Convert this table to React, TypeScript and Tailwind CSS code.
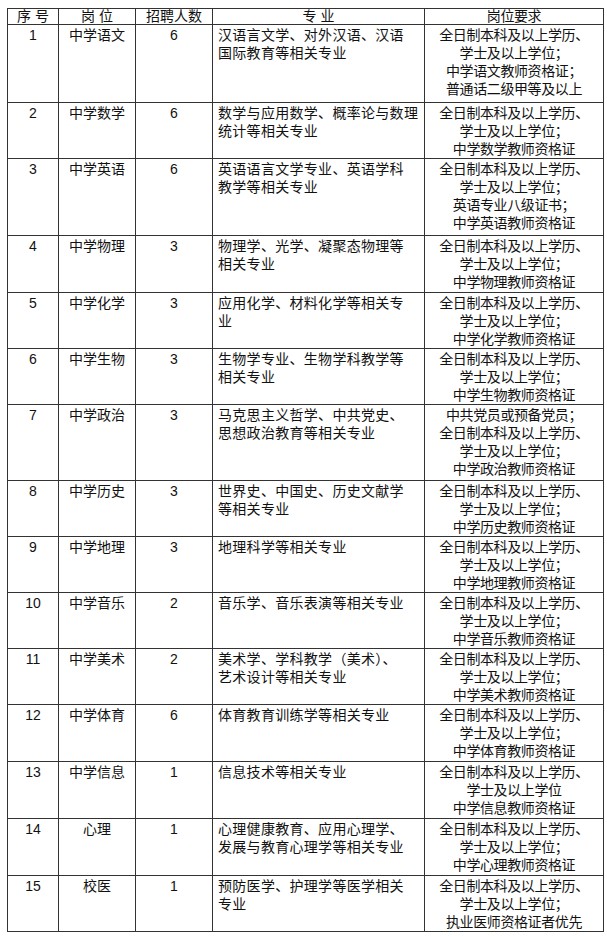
import React from "react";

type Row = {
  no: string;
  post: string;
  count: string;
  major: string[];
  req: string[];
  h: number;
};

const REQ = ["全日制本科及以上学历、", "学士及以上学位；"];

const ROWS: Row[] = [
  { no: "1", post: "中学语文", count: "6", major: ["汉语言文学、对外汉语、汉语", "国际教育等相关专业"], req: [...REQ, "中学语文教师资格证；", "普通话二级甲等及以上"], h: 78 },
  { no: "2", post: "中学数学", count: "6", major: ["数学与应用数学、概率论与数理", "统计等相关专业"], req: [...REQ, "中学数学教师资格证"], h: 54 },
  { no: "3", post: "中学英语", count: "6", major: ["英语语言文学专业、英语学科", "教学等相关专业"], req: [...REQ, "英语专业八级证书；", "中学英语教师资格证"], h: 77 },
  { no: "4", post: "中学物理", count: "3", major: ["物理学、光学、凝聚态物理等", "相关专业"], req: [...REQ, "中学物理教师资格证"], h: 57 },
  { no: "5", post: "中学化学", count: "3", major: ["应用化学、材料化学等相关专", "业"], req: [...REQ, "中学化学教师资格证"], h: 56 },
  { no: "6", post: "中学生物", count: "3", major: ["生物学专业、生物学科教学等", "相关专业"], req: [...REQ, "中学生物教师资格证"], h: 56 },
  { no: "7", post: "中学政治", count: "3", major: ["马克思主义哲学、中共党史、", "思想政治教育等相关专业"], req: ["中共党员或预备党员；", ...REQ, "中学政治教师资格证"], h: 76 },
  { no: "8", post: "中学历史", count: "3", major: ["世界史、中国史、历史文献学", "等相关专业"], req: [...REQ, "中学历史教师资格证"], h: 56 },
  { no: "9", post: "中学地理", count: "3", major: ["地理科学等相关专业"], req: [...REQ, "中学地理教师资格证"], h: 56 },
  { no: "10", post: "中学音乐", count: "2", major: ["音乐学、音乐表演等相关专业"], req: [...REQ, "中学音乐教师资格证"], h: 55 },
  { no: "11", post: "中学美术", count: "2", major: ["美术学、学科教学（美术）、", "艺术设计等相关专业"], req: [...REQ, "中学美术教师资格证"], h: 56 },
  { no: "12", post: "中学体育", count: "6", major: ["体育教育训练学等相关专业"], req: [...REQ, "中学体育教师资格证"], h: 57 },
  { no: "13", post: "中学信息", count: "1", major: ["信息技术等相关专业"], req: ["全日制本科及以上学历、", "学士及以上学位", "中学信息教师资格证"], h: 57 },
  { no: "14", post: "心理", count: "1", major: ["心理健康教育、应用心理学、", "发展与教育心理学等相关专业"], req: [...REQ, "中学心理教师资格证"], h: 57 },
  { no: "15", post: "校医", count: "1", major: ["预防医学、护理学等医学相关", "专业"], req: [...REQ, "执业医师资格证者优先"], h: 56 },
];

const cell = "border border-[#333] align-top p-0 whitespace-nowrap";

export default function App() {
  return (
    <div
      className="min-h-[936px] bg-white pl-[7px] pt-[8px] text-[14px] leading-[18px] text-[#111]"
      style={{ fontFamily: '"Liberation Sans", "Noto Sans CJK SC", sans-serif' }}
    >
      <table className="table-fixed border-collapse w-[596px]">
        <colgroup>
          <col className="w-[51px]" />
          <col className="w-[77px]" />
          <col className="w-[77px]" />
          <col className="w-[212px]" />
          <col className="w-[179px]" />
        </colgroup>
        <thead>
          <tr className="h-[16px] leading-[15px]">
            <th className={`${cell} font-normal text-center`}>序 号</th>
            <th className={`${cell} font-normal text-center`}>岗 位</th>
            <th className={`${cell} font-normal text-center`}>招聘人数</th>
            <th className={`${cell} font-normal text-center`}>专 业</th>
            <th className={`${cell} font-normal text-center tracking-[-0.4px]`}>岗位要求</th>
          </tr>
        </thead>
        <tbody>
          {ROWS.map((r) => (
            <tr key={r.no} style={{ height: r.h }}>
              <td className={`${cell} text-center pt-[1px]`}>{r.no}</td>
              <td className={`${cell} text-center pt-[1px]`}>{r.post}</td>
              <td className={`${cell} text-center pt-[1px]`}>{r.count}</td>
              <td className={`${cell} pl-[5px] pt-[1px] tracking-[0.3px]`}>
                {r.major.map((m) => (
                  <div key={m}>{m}</div>
                ))}
              </td>
              <td className={`${cell} text-center pt-[1px] tracking-[-0.4px]`}>
                {r.req.map((q, i) => (
                  <div key={i}>{q}</div>
                ))}
              </td>
            </tr>
          ))}
        </tbody>
      </table>
    </div>
  );
}
